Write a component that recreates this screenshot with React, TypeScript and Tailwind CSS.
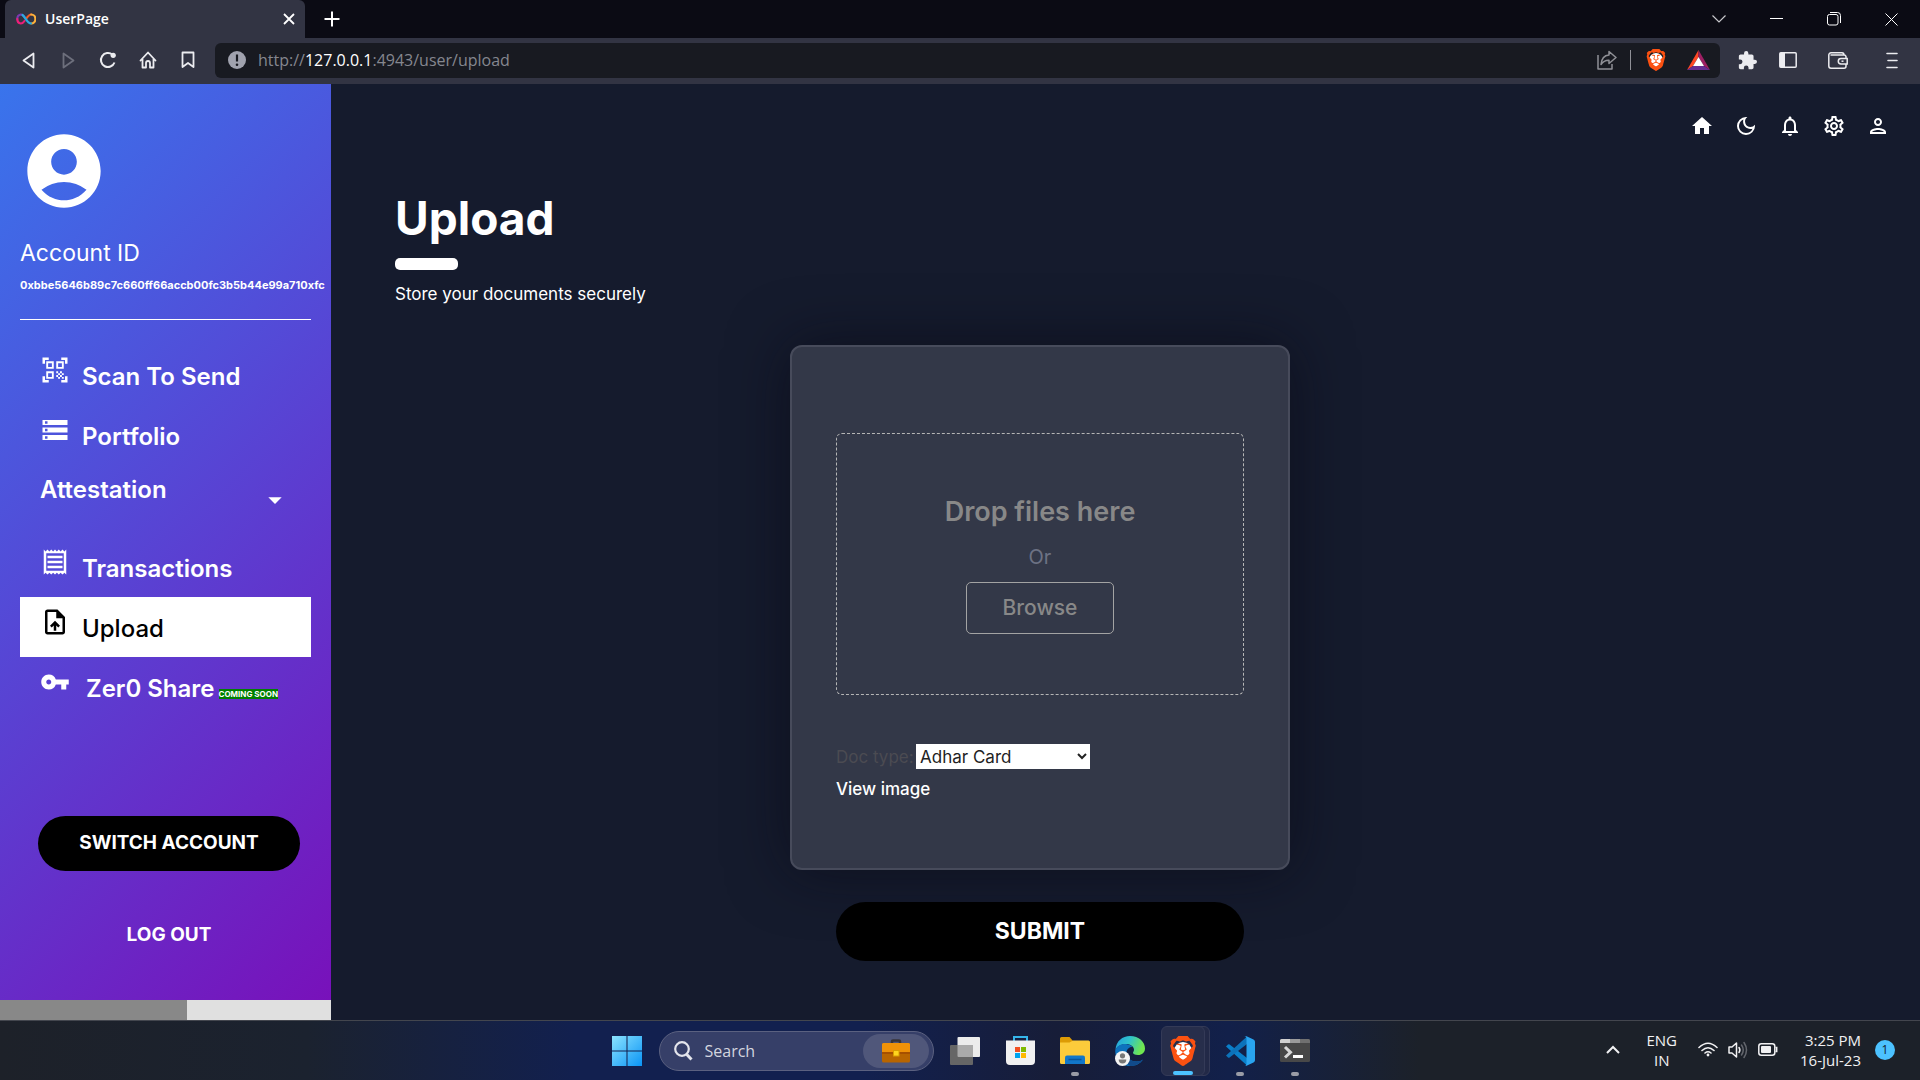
import type { ReactNode } from "react";
import {
  MdAccountCircle,
  MdArrowDropDown,
  MdHome,
  MdNotificationsNone,
  MdOutlineDarkMode,
  MdOutlinePerson,
  MdOutlineReceipt,
  MdOutlineSettings,
  MdOutlineUploadFile,
  MdQrCodeScanner,
  MdStorage,
  MdVpnKey,
} from "react-icons/md";
import { SiBrave } from "react-icons/si";

const navTop = [
  { label: "Scan To Send", icon: <MdQrCodeScanner size={30} /> },
  { label: "Portfolio", icon: <MdStorage size={30} /> },
];

const topActions = [
  { label: "Home", icon: <MdHome size={24} /> },
  { label: "Dark mode", icon: <MdOutlineDarkMode size={24} /> },
  { label: "Notifications", icon: <MdNotificationsNone size={24} /> },
  { label: "Settings", icon: <MdOutlineSettings size={24} /> },
  { label: "Profile", icon: <MdOutlinePerson size={24} /> },
];

const IconButton = ({ label, className = "", children }: { label: string; className?: string; children: ReactNode }) => (
  <button type="button" aria-label={label} className={`flex shrink-0 items-center justify-center ${className}`}>
    {children}
  </button>
);

const BraveLogo = ({ size }: { size: number }) => (
  <span className="relative flex items-center justify-center text-[#fb5111]">
    <span className="absolute h-3/5 w-3/5 rounded-full bg-white" />
    <SiBrave size={size} className="relative" />
  </span>
);

const TabStrip = () => (
  <div className="flex h-[38px] items-stretch bg-[#0b0b14] text-white">
    <div className="ml-[5px] flex w-[300px] items-center rounded-t-md bg-[#323443] pr-2 pl-[11px]">
      <svg width="20" height="12" viewBox="0 0 20 12" fill="none" strokeWidth="2.2" strokeLinecap="round">
        <path d="M10 6C8 3 6.700 1.500 4.800 1.500A4.200 4.500 0 0 0 1.300 6" stroke="#7a3bb0" />
        <path d="M1.300 6A4 4.500 0 0 0 4.800 10.500C6.300 10.500 7.500 9.500 8.500 8" stroke="#ed1e79" />
        <path d="M10 6C12 3 13.300 1.500 15.200 1.500" stroke="#f15a24" />
        <path d="M15.200 1.500A4.200 4.500 0 0 1 15.200 10.500" stroke="#fbb03b" />
        <path d="M6.500 2C9 3.500 11 10.500 15 10.500" stroke="#29abe2" />
      </svg>
      <span className="ml-[9px] flex-1 text-sm font-semibold">UserPage</span>
      <IconButton label="Close tab" className="h-4 w-4">
        <svg width="12" height="12" viewBox="0 0 12 12" stroke="currentColor" strokeWidth="1.800">
          <path d="M1 1l10 10M11 1L1 11" />
        </svg>
      </IconButton>
    </div>
    <IconButton label="New tab" className="ml-[19px] w-4">
      <svg width="16" height="16" viewBox="0 0 16 16" stroke="currentColor" strokeWidth="2">
        <path d="M8 0.500v15M0.500 8h15" />
      </svg>
    </IconButton>
    <div className="ml-auto flex">
      <IconButton label="Search tabs" className="w-[58px]">
        <svg width="14" height="8" viewBox="0 0 14 8" fill="none" stroke="#c8c8cc" strokeWidth="1.200">
          <path d="M0.500 0.500L7 7l6.500-6.500" />
        </svg>
      </IconButton>
      <IconButton label="Minimize" className="w-[57px]">
        <svg width="13" height="2" viewBox="0 0 13 2"><path d="M0 0.500h13" stroke="white" /></svg>
      </IconButton>
      <IconButton label="Restore" className="w-[57px]">
        <svg width="14" height="14" viewBox="0 0 14 14" fill="none" stroke="white">
          <rect x="0.500" y="2.500" width="10.500" height="10.500" rx="2" />
          <path d="M3 0.500h7.500a3 3 0 0 1 3 3V11" />
        </svg>
      </IconButton>
      <IconButton label="Close" className="w-[58px]">
        <svg width="13" height="13" viewBox="0 0 13 13" stroke="white"><path d="M0.500 0.500l12 12M12.500 0.500l-12 12" /></svg>
      </IconButton>
    </div>
  </div>
);

const AddressBar = () => (
  <div className="flex h-[46px] items-center bg-[#323443] pb-0.5 text-[#ececf0]">
    <div className="flex pr-2 pl-2">
      <IconButton label="Back" className="w-10">
        <svg width="13" height="17" viewBox="0 0 13 17" fill="none" stroke="currentColor" strokeWidth="1.800" strokeLinejoin="round">
          <path d="M11.500 1.500v14L1.500 8.500z" />
        </svg>
      </IconButton>
      <IconButton label="Forward" className="w-10 text-[#6d6f7c]">
        <svg width="13" height="17" viewBox="0 0 13 17" fill="none" stroke="currentColor" strokeWidth="1.800" strokeLinejoin="round">
          <path d="M1.500 1.500v14l10-7z" />
        </svg>
      </IconButton>
      <IconButton label="Reload" className="w-10">
        <svg width="18" height="18" viewBox="0 0 18 18" fill="none" stroke="currentColor" strokeWidth="2">
          <path d="M15.500 11.500A7 7 0 1 1 13.500 3.700" />
          <circle cx="14.200" cy="4.300" r="2.600" fill="currentColor" stroke="none" />
        </svg>
      </IconButton>
      <IconButton label="Home" className="w-10">
        <svg width="18" height="18" viewBox="0 0 18 18" fill="none" stroke="currentColor" strokeWidth="1.800" strokeLinejoin="round" strokeLinecap="round">
          <path d="M1.500 9.500L9 1.500l7.500 8M3.500 8v8.500h3.500V12a2 2 0 0 1 4 0v4.500h3.500V8" />
        </svg>
      </IconButton>
      <IconButton label="Bookmark" className="w-[39px]">
        <svg width="14" height="18" viewBox="0 0 14 18" fill="none" stroke="currentColor" strokeWidth="1.800" strokeLinejoin="round">
          <path d="M1.500 1.500h11v14.500L7 12l-5.500 4z" />
        </svg>
      </IconButton>
    </div>
    <div className="flex h-[35px] flex-1 items-center rounded-md bg-[#181a21] pr-[10px] pl-[13px]">
      <svg width="18" height="18" viewBox="0 0 18 18">
        <circle cx="9" cy="9" r="9" fill="#a0a2ae" />
        <path d="M9 3.500v7" stroke="#181a21" strokeWidth="2.200" />
        <circle cx="9" cy="13.700" r="1.300" fill="#181a21" />
      </svg>
      <p className="ml-3 flex-1 text-base text-[#85878f]">
        http://<span className="text-white">127.0.0.1</span>:4943/user/upload
      </p>
      <IconButton label="Share" className="text-[#8f9096]">
        <svg width="20" height="20" viewBox="0 0 20 20" fill="none" stroke="currentColor" strokeWidth="1.500" strokeLinejoin="round">
          <path d="M1 5v14h14v-5" />
          <path d="M12 1.500l7 6-7 6v-3.300C8 10 6 11.500 4 14.500 4.500 9 7.500 5.300 12 5z" />
        </svg>
      </IconButton>
      <span className="mr-[14px] ml-[13px] h-5 w-px bg-[#8f9096]" />
      <IconButton label="Brave Shields"><BraveLogo size={22} /></IconButton>
      <IconButton label="Brave Rewards" className="ml-5">
        <svg width="23" height="20" viewBox="0 0 23 20">
          <path d="M11.500 0L0 20l6-4 5.500-9z" fill="#ff4724" />
          <path d="M11.500 0L23 20l-6-4-5.500-9z" fill="#9e1f63" />
          <path d="M0 20h23l-6-4H6z" fill="#662d91" />
          <path d="M11.500 7l5.500 9H6z" fill="white" />
        </svg>
      </IconButton>
    </div>
    <div className="flex items-center pr-[22px] pl-[18px]">
      <IconButton label="Extensions">
        <svg width="19" height="19" viewBox="1 1 22 22" fill="currentColor">
          <path d="M20.500 11H19V7c0-1.100-.9-2-2-2h-4V3.500a2.500 2.500 0 0 0-5 0V5H4c-1.100 0-2 .9-2 2v3.800h1.500a2.700 2.700 0 0 1 0 5.400H2V20c0 1.100.9 2 2 2h3.800v-1.500a2.700 2.700 0 0 1 5.400 0V22H17c1.100 0 2-.9 2-2v-4h1.500a2.500 2.500 0 0 0 0-5z" />
        </svg>
      </IconButton>
      <IconButton label="Sidebar" className="ml-[22px]">
        <svg width="18" height="16" viewBox="0 0 18 16" fill="none" stroke="currentColor" strokeWidth="1.500">
          <rect x="0.800" y="0.800" width="16.400" height="14.400" rx="1" />
          <path d="M1 1h5v14H1z" fill="currentColor" stroke="none" />
        </svg>
      </IconButton>
      <IconButton label="Wallet" className="ml-[31px]">
        <svg width="20" height="17" viewBox="0 0 20 17" fill="none" stroke="currentColor" strokeWidth="1.500">
          <path d="M18 6V4.500a2 2 0 0 0-2-1.500H2.500M16 3c0-1.500-1-2.200-2-2.200H3A2.200 2.200 0 0 0 .8 3v11A2.200 2.200 0 0 0 3 16.200h13a2 2 0 0 0 2-2V12" />
          <path d="M19.200 6.500H13a2.700 2.700 0 0 0 0 5.400h6.200z" />
          <path d="M13.500 9.200h2" />
        </svg>
      </IconButton>
      <IconButton label="Menu" className="ml-[38px]">
        <svg width="12" height="17" viewBox="0 0 12 17" stroke="currentColor" strokeWidth="1.600" strokeLinecap="round">
          <path d="M1 1.500h10M2 8.500h9M1 15.500h10" />
        </svg>
      </IconButton>
    </div>
  </div>
);

const NavLink = ({ icon, active = false, children }: { icon: ReactNode; active?: boolean; children: ReactNode }) => (
  <a
    href="#"
    className={`flex h-[60px] items-start gap-3 pt-[10px] pl-5 text-2xl leading-9 ${
      active ? "bg-white font-medium text-black" : "font-semibold text-white"
    }`}
  >
    {icon}
    <span className="mt-1 whitespace-nowrap">{children}</span>
  </a>
);

const Sidebar = () => (
  <aside className="flex w-[331px] shrink-0 flex-col text-white">
    <div className="flex flex-1 flex-col overflow-hidden bg-[linear-gradient(135deg,#3974ec,#7811ba)] px-5 pt-[43px] pb-9">
      <MdAccountCircle size={88} />
      <h2 className="mt-5 text-[23px] leading-9">Account ID</h2>
      <p className="border-b border-white pb-5 text-[11px] leading-7 font-bold whitespace-nowrap">
        0xbbe5646b89c7c660ff66accb00fc3b5b44e99a710xfc
      </p>
      <nav className="mt-[25px]">
        {navTop.map((item) => (
          <NavLink key={item.label} icon={item.icon}>{item.label}</NavLink>
        ))}
        <button type="button" className="flex h-[72px] w-full items-start justify-between px-5 pt-[7px] text-2xl leading-9 font-semibold">
          Attestation
          <MdArrowDropDown size={32} className="mt-3" />
        </button>
        <NavLink icon={<MdOutlineReceipt size={30} />}>Transactions</NavLink>
        <NavLink active icon={<MdOutlineUploadFile size={30} />}>Upload</NavLink>
        <NavLink icon={<MdVpnKey size={30} />}>
          <span className="ml-1">Zer0 Share</span>
          <span className="ml-1 bg-[#008000] text-[8px] leading-3 font-bold">COMING SOON</span>
        </NavLink>
      </nav>
      <button type="button" className="mt-[99px] mr-[11px] ml-[18px] h-[55px] shrink-0 rounded-full bg-black text-[19px] font-bold">
        SWITCH ACCOUNT
      </button>
      <button type="button" className="mt-[37px] mr-[11px] ml-[18px] h-[55px] shrink-0 text-[19px] font-bold">
        LOG OUT
      </button>
    </div>
    <div className="h-5 bg-[#e0e0e0]">
      <div className="h-full w-[187px] bg-[#888888]" />
    </div>
  </aside>
);

const UploadPage = () => (
  <main className="min-w-0 flex-1 bg-[#151b2d] pt-[30px] text-white">
    <div className="flex justify-end gap-5 pr-[30px]">
      {topActions.map((action) => (
        <IconButton key={action.label} label={action.label}>{action.icon}</IconButton>
      ))}
    </div>
    <section className="mt-[50px] pr-[235px] pl-16">
      <h1 className="text-[46px] leading-[60px] font-bold">Upload</h1>
      <div className="mt-[10px] h-3 w-[63px] rounded-[5px] bg-white" />
      <p className="mt-3 text-[17px] leading-6">Store your documents securely</p>

      <form className="mt-[39px] flex flex-col items-center" onSubmit={(e) => e.preventDefault()}>
        <div className="w-[500px] max-w-full rounded-xl border-2 border-[#474b5b] bg-[#333848] px-11 pt-[86px] pb-[67px] shadow-[0_0_60px_rgba(8,8,20,0.6)]">
          <div className="flex flex-col items-center rounded-md border border-dashed border-[#b5b5b5] pt-[58px] pb-[60px]">
            <h3 className="text-[27px] leading-10 font-semibold text-[#888888]">Drop files here</h3>
            <p className="mt-[10px] text-xl leading-[30px] text-[#6d7284]">Or</p>
            <button type="button" className="mt-[10px] h-[52px] w-[148px] rounded-[5px] border border-[#a3a3a3] text-[21px] font-medium text-[#888888]">
              Browse
            </button>
          </div>
          <div className="mt-[49px] flex items-center">
            <label htmlFor="doc-type" className="w-20 text-[17px] leading-6 whitespace-nowrap text-[#4b4b52]">Doc type:</label>
            <select id="doc-type" className="h-[25px] w-[174px] bg-white text-[17px] text-[#222222]">
              <option>Adhar Card</option>
            </select>
          </div>
          <a href="#" className="mt-2 block text-[17px] leading-6 font-medium">View image</a>
        </div>
        <button type="submit" className="mt-8 h-[59px] w-[408px] max-w-full rounded-full bg-black text-[23px] font-bold">
          SUBMIT
        </button>
      </form>
    </section>
  </main>
);

const TaskIcon = ({ label, running = false, children }: { label: string; running?: boolean; children: ReactNode }) => (
  <button type="button" aria-label={label} className="relative flex h-[50px] w-[55px] items-center justify-center">
    {children}
    {running && <span className="absolute bottom-0 h-1 w-2 rounded-full bg-[#9a9ca6]" />}
  </button>
);

const Taskbar = () => (
  <footer className="grid h-[60px] grid-cols-[1fr_auto_1fr] items-center border-t border-[#43464e] bg-[linear-gradient(90deg,#1d2129_0%,#1b222f_16%,#12204f_30%,#12204f_45%,#171d38_55%,#12204a_64%,#1c2129_74%,#1c2129_100%)] text-[#f1f1f3]">
    <span />
    <div className="flex items-center pl-3">
      <button type="button" aria-label="Start" className="mr-[17px] ml-[2px]">
        <svg width="30" height="30" viewBox="0 0 29 29">
          <defs>
            <linearGradient id="win" x1="0" y1="0" x2="1" y2="1">
              <stop offset="0" stopColor="#8be3ff" />
              <stop offset="1" stopColor="#0a94f5" />
            </linearGradient>
          </defs>
          <path d="M0 0h14v14H0zM15 0h14v14H15zM0 15h14v14H0zM15 15h14v14H15z" fill="url(#win)" />
        </svg>
      </button>
      <div className="mr-1 flex h-10 w-[275px] items-center rounded-full border border-[#5b6180] bg-[#363f68] pr-1 pl-[14px]">
        <svg width="19" height="20" viewBox="0 0 19 20" fill="none" stroke="#e4e5ec" strokeWidth="2.200">
          <circle cx="8" cy="8" r="6.800" />
          <path d="M12.800 13.500l4.700 5" strokeWidth="3" />
        </svg>
        <input aria-label="Search" placeholder="Search" className="ml-3 w-0 min-w-0 flex-1 bg-transparent text-base placeholder:text-[#d3d5df] focus:outline-none" />
        <span className="flex h-[34px] w-[66px] items-center justify-center rounded-full bg-[#50577a]">
          <svg width="28" height="24" viewBox="0 0 28 24">
            <path d="M10 4V2.500Q10 1.500 11 1.500h6q1 0 1 1V4" fill="none" stroke="#37343a" strokeWidth="2.500" />
            <rect y="4" width="28" height="19.500" rx="1.500" fill="#b86500" />
            <path d="M1.500 4h25A1.500 1.500 0 0 1 28 5.500V14H0V5.500A1.500 1.500 0 0 1 1.500 4z" fill="#ef9208" />
            <path d="M0 13h28v2H0z" fill="#a65000" />
            <rect x="11.500" y="11.500" width="5.500" height="5.500" fill="#ffd51e" stroke="#d99e00" />
          </svg>
        </span>
      </div>
      <TaskIcon label="Task view">
        <svg width="30" height="28" viewBox="0 0 30 28">
          <rect x="7.500" width="22.500" height="20" rx="1" fill="#ececec" />
          <rect y="8" width="23" height="20" rx="1" fill="#666666" />
          <path d="M7.500 8H23v12H8.500a1 1 0 0 1-1-1z" fill="#aaaaaa" />
        </svg>
      </TaskIcon>
      <TaskIcon label="Microsoft Store">
        <svg width="29" height="29" viewBox="0 0 29 29">
          <path d="M8 5V1h13v4" fill="none" stroke="#35b5ea" strokeWidth="2" />
          <path d="M0 4.500h29V25a4 4 0 0 1-4 4H4a4 4 0 0 1-4-4z" fill="#f1f1f1" />
          <path d="M9 11h5v5H9z" fill="#f25022" />
          <path d="M15 11h5v5h-5z" fill="#7fba00" />
          <path d="M9 17h5v5H9z" fill="#00a4ef" />
          <path d="M15 17h5v5h-5z" fill="#ffb900" />
        </svg>
      </TaskIcon>
      <TaskIcon label="File Explorer" running>
        <svg width="30" height="27" viewBox="0 0 30 27">
          <path d="M0 10V1.500A1.500 1.500 0 0 1 1.500 0h8L13 4l-3 6z" fill="#dd9b05" />
          <path d="M0 5.500h9.500L13 3.500h15.500A1.500 1.500 0 0 1 30 5v20.500A1.500 1.500 0 0 1 28.500 27h-27A1.500 1.500 0 0 1 0 25.500z" fill="#fccb3b" />
          <path d="M5 27v-6.500a2 2 0 0 1 2-2h16a2 2 0 0 1 2 2V27z" fill="#1277c9" />
          <path d="M8.500 22.500h13" stroke="#0a559b" strokeWidth="1.500" />
        </svg>
      </TaskIcon>
      <TaskIcon label="Microsoft Edge">
        <svg width="30" height="30" viewBox="0 0 30 30">
          <defs>
            <linearGradient id="edge" x1="0" y1="0" x2="1" y2="0.300">
              <stop offset="0" stopColor="#239fdf" />
              <stop offset="0.500" stopColor="#2fc3cb" />
              <stop offset="1" stopColor="#70e650" />
            </linearGradient>
          </defs>
          <path d="M0.500 14C1 5 7.500 0 15 0c9 0 15 6 15 12.500 0 4-3 6.500-7 6.500-3.500 0-5-1.200-5-2.200s1-1.300 1-3.300C19 10.500 15.500 8 11 8 6 8 2 10.500 0.500 14z" fill="url(#edge)" />
          <path d="M0.300 14C2 9.500 7 7.500 11 8c3 0.300 5.500 1.500 6.500 3-3-.5-6 2-6 6 0 5 5 8.500 10 8.500 3 0 5-1 6.500-2-3 4.500-7.500 6.500-13 6.500C6 30-0.500 22.500 0.300 14z" fill="#0e72bd" />
          <path d="M11.500 17c0 5 5 8.500 10 8.500 3 0 5-1 6.500-2-3 4-7 6.500-13 6.500-4.500-3-7-9-3.500-13z" fill="#114a8b" />
          <circle cx="7.500" cy="22.500" r="7.500" fill="#f4f4f4" />
          <circle cx="7.500" cy="19.800" r="2.600" fill="#777777" />
          <path d="M3.700 23.500h7.600q0 4-3.800 4t-3.800-4z" fill="#777777" />
        </svg>
      </TaskIcon>
      <div className="relative flex h-[50px] w-[55px] items-center">
        <span className="absolute left-[9px] h-[50px] w-[43px] rounded-md border border-[#343a57] bg-[#222947]" />
        <button type="button" aria-label="Brave" className="relative ml-[3px] flex h-[50px] w-[44px] items-center justify-center rounded-md border border-[#343a57] bg-[#272e4b]">
          <BraveLogo size={30} />
          <span className="absolute bottom-0 h-1 w-5 rounded-full bg-[#4cc2ff]" />
        </button>
      </div>
      <TaskIcon label="Visual Studio Code" running>
        <svg width="30" height="30" viewBox="0 0 30 30">
          <path d="M1 10.500L3 8.500q.8-.6 1.600 0L22 22v7.500z" fill="#0a7fca" />
          <path d="M1 19.500L22 0.500V8L4.600 21.500q-.8.600-1.600 0z" fill="#0c72ba" />
          <path d="M21.500 0.200l7 3.300q1.500.8 1.500 2.200v18.600q0 1.400-1.500 2.200l-7 3.300q-1 .3-2-.7 2 1 2-1.500V2.400Q21.500 0 19.500.900q1-1 2-.7z" fill="#29a4ef" />
        </svg>
      </TaskIcon>
      <TaskIcon label="Terminal" running>
        <svg width="30" height="23" viewBox="0 0 30 23">
          <rect width="30" height="23" rx="1.500" fill="#484848" />
          <path d="M0 4V1.500A1.500 1.500 0 0 1 1.500 0H10v4z" fill="#d0d0d0" />
          <path d="M10 0h10v4H10z" fill="#9b9b9b" />
          <path d="M20 0h8.500A1.500 1.500 0 0 1 30 1.500V4H20z" fill="#707070" />
          <path d="M5 8l5.500 5.300L5 18.500" fill="none" stroke="#d8d8d8" strokeWidth="3" />
          <path d="M13 17.500h10" stroke="white" strokeWidth="3" />
        </svg>
      </TaskIcon>
    </div>
    <div className="flex items-center justify-end pr-[25px] pb-0.5 text-[15px] leading-5">
      <IconButton label="Show hidden icons">
        <svg width="14" height="9" viewBox="0 0 14 9" fill="none" stroke="currentColor" strokeWidth="2"><path d="M1 8l6-6 6 6" /></svg>
      </IconButton>
      <p className="ml-[26px] text-center">ENG<br />IN</p>
      <div className="ml-[21px] flex items-center gap-[10px]">
        <svg width="20" height="15" viewBox="0 0 20 15" fill="none" stroke="currentColor" strokeWidth="1.600" strokeLinecap="round">
          <path d="M1 5.500Q10-3 19 5.500M4 8.500q6-5.500 12 0M7 11q3-2.500 6 0" />
          <circle cx="10" cy="13" r="1.400" fill="currentColor" stroke="none" />
        </svg>
        <svg width="20" height="18" viewBox="0 0 20 18" fill="none" stroke="currentColor" strokeWidth="1.500" strokeLinecap="round">
          <path d="M1 6v6h3l4.500 4V2L4 6z" strokeLinejoin="round" />
          <path d="M11 6.500q1.800 2.500 0 5" />
          <path d="M13.500 4q3.500 5 0 10M16 1.500q5 7.500 0 15" stroke="#63666d" />
        </svg>
        <svg width="20" height="13" viewBox="0 0 20 13" fill="none" stroke="currentColor" strokeWidth="1.500">
          <rect x="0.800" y="0.800" width="16" height="11.400" rx="2.500" />
          <rect x="3" y="3" width="10" height="7" rx="1" fill="currentColor" stroke="none" />
          <path d="M17.500 4.500h1.200v4h-1.200" />
        </svg>
      </div>
      <p className="ml-[22px] text-right">3:25 PM<br />16-Jul-23</p>
      <span className="ml-[14px] flex h-5 w-5 items-center justify-center rounded-full bg-[#4cc2ff] text-xs text-[#12242f]">1</span>
    </div>
  </footer>
);

export default function App() {
  return (
    <div className="flex min-h-screen flex-col bg-[#151b2d] font-['Inter',sans-serif]">
      <header className="font-['Open_Sans','Noto_Sans',sans-serif]">
        <TabStrip />
        <AddressBar />
      </header>
      <div className="flex flex-1">
        <Sidebar />
        <UploadPage />
      </div>
      <div className="font-['Open_Sans','Noto_Sans',sans-serif]">
        <Taskbar />
      </div>
    </div>
  );
}
